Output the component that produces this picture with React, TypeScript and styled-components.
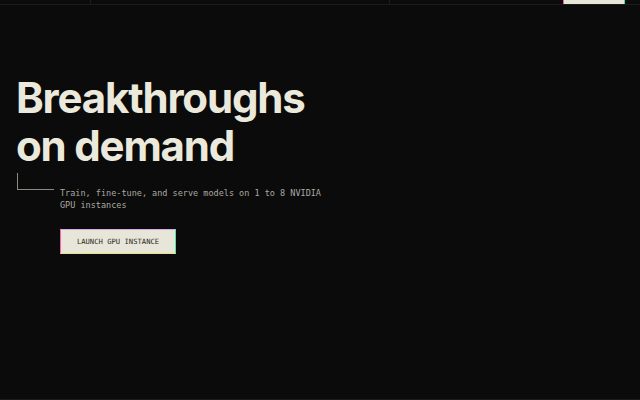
import React from "react";
import styled, { createGlobalStyle } from "styled-components";

const GlobalStyle = createGlobalStyle`
  html, body {
    margin: 0;
    padding: 0;
    background: #0b0b0b;
  }
  body {
    font-family: Inter, "Liberation Sans", sans-serif;
  }
`;

const Page = styled.div`
  width: 640px;
  height: 400px;
  background: #0b0b0b;
  display: flex;
  flex-direction: column;
  overflow: hidden;
`;

const Header = styled.div`
  height: 4px;
  display: grid;
  grid-template-columns: 91px 299px 1fr;
  border-bottom: 1px solid #1c1c1c;
  flex-shrink: 0;
`;

const HeaderCell = styled.div<{ $last?: boolean }>`
  border-right: ${(p) => (p.$last ? "none" : "1px solid #1c1c1c")};
  display: flex;
  justify-content: flex-end;
  padding-right: 15px;
`;

const HeaderButton = styled.div`
  width: 62px;
  height: 4px;
  background: #e8e6d9;
  border-left: 1px solid #ff4fb0;
  border-right: 1px solid #3fe29a;
  box-sizing: border-box;
`;

const Hero = styled.main`
  flex: 1;
  padding: 69px 0 0 16px;
  border-bottom: 1px solid #1c1c1c;
`;

const Title = styled.h1`
  margin: 0;
  font-family: Inter, "Liberation Sans", sans-serif;
  font-weight: 700;
  font-size: 42px;
  line-height: 48px;
  letter-spacing: -0.028em;
  color: #ebe9dc;
`;

const Lead = styled.div`
  display: flex;
  margin-top: 3px;
  padding-left: 1px;
`;

const Corner = styled.div`
  width: 36px;
  height: 16px;
  border-left: 1px solid #8a8a84;
  border-bottom: 1px solid #8a8a84;
  flex-shrink: 0;
`;

const LeadBody = styled.div`
  padding: 14px 0 0 6px;
`;

const Description = styled.p`
  margin: 0;
  width: 270px;
  font-family: "DejaVu Sans Mono", "Liberation Mono", monospace;
  font-size: 8.5px;
  line-height: 12px;
  color: #aaa9a1;
`;

const LaunchButton = styled.button`
  margin-top: 18px;
  width: 116px;
  height: 25px;
  background: #e8e6d9;
  border: 1px solid;
  border-color: #d6a8e6 #4fe8a0 #e9e28a #ff5fb8;
  font-family: "DejaVu Sans Mono", "Liberation Mono", monospace;
  font-size: 7.2px;
  color: #2a2a28;
  padding: 0;
  cursor: pointer;
`;

export default function App() {
  return (
    <Page>
      <GlobalStyle />
      <Header>
        <HeaderCell />
        <HeaderCell />
        <HeaderCell $last>
          <HeaderButton />
        </HeaderCell>
      </Header>
      <Hero>
        <Title>
          Breakthroughs
          <br />
          on demand
        </Title>
        <Lead>
          <Corner />
          <LeadBody>
            <Description>
              Train, fine-tune, and serve models on 1 to 8 NVIDIA GPU instances
            </Description>
            <LaunchButton>LAUNCH GPU INSTANCE</LaunchButton>
          </LeadBody>
        </Lead>
      </Hero>
    </Page>
  );
}
